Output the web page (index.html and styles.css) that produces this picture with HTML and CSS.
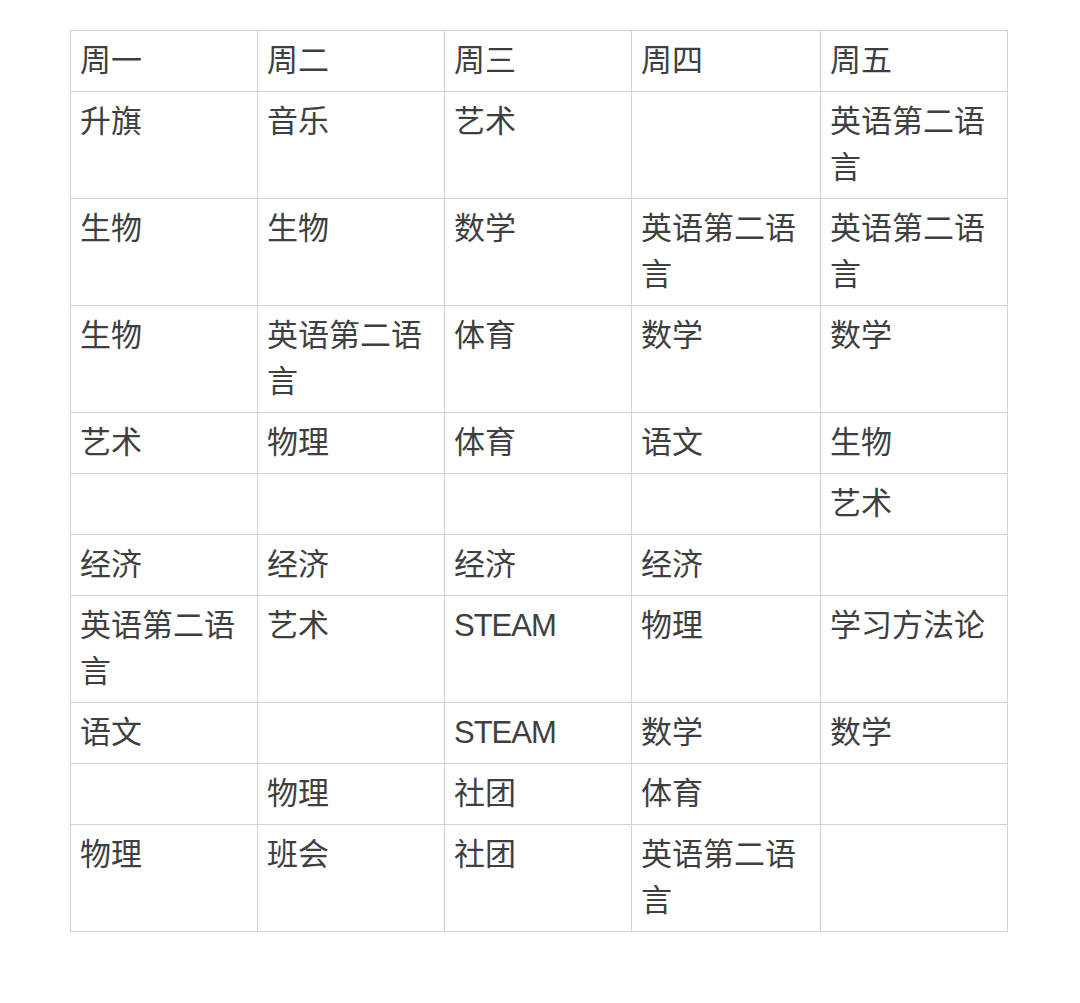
FILE: index.html
```html
<!DOCTYPE html>
<html lang="zh">
<head>
<meta charset="utf-8">
<link rel="stylesheet" href="styles.css">
</head>
<body>
<table class="schedule">
<colgroup><col class="c"><col class="c"><col class="c"><col class="c-wide"><col class="c"></colgroup>
<tr><td>周一</td><td>周二</td><td>周三</td><td>周四</td><td>周五</td></tr>
<tr><td>升旗</td><td>音乐</td><td>艺术</td><td></td><td>英语第二语言</td></tr>
<tr><td>生物</td><td>生物</td><td>数学</td><td>英语第二语言</td><td>英语第二语言</td></tr>
<tr><td>生物</td><td>英语第二语言</td><td>体育</td><td>数学</td><td>数学</td></tr>
<tr><td>艺术</td><td>物理</td><td>体育</td><td>语文</td><td>生物</td></tr>
<tr><td></td><td></td><td></td><td></td><td>艺术</td></tr>
<tr><td>经济</td><td>经济</td><td>经济</td><td>经济</td><td></td></tr>
<tr><td>英语第二语言</td><td>艺术</td><td class="latin">STEAM</td><td>物理</td><td>学习方法论</td></tr>
<tr><td>语文</td><td></td><td class="latin">STEAM</td><td>数学</td><td>数学</td></tr>
<tr><td></td><td>物理</td><td>社团</td><td>体育</td><td></td></tr>
<tr><td>物理</td><td>班会</td><td>社团</td><td>英语第二语言</td><td></td></tr>
</table>
</body>
</html>
```
FILE: styles.css
```css
html, body {
  margin: 0;
  padding: 0;
  background: #ffffff;
}
body {
  padding: 30px 0 0 70px;
  font-family: "Liberation Sans", "Noto Sans CJK SC", sans-serif;
  color: #3f3f3f;
}
.schedule {
  border-collapse: collapse;
  table-layout: fixed;
  width: 938px;
}
.schedule .c {
  width: 187px;
}
.schedule .c-wide {
  width: 189px;
}
.schedule td {
  border: 1px solid #d2d2d2;
  padding: 7px 9px;
  font-size: 31px;
  line-height: 46px;
  vertical-align: top;
  height: 46px;
  word-break: break-all;
}
.schedule td.latin {
  letter-spacing: -1px;
}
```
